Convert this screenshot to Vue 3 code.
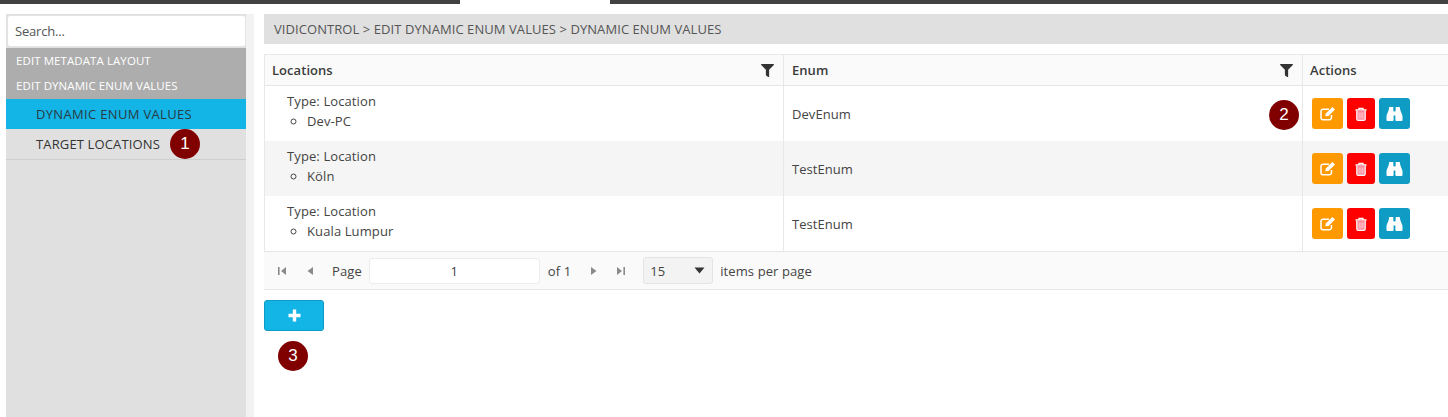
<script setup>
const rows = [
  { place: 'Dev-PC', en: 'DevEnum' },
  { place: 'Köln', en: 'TestEnum' },
  { place: 'Kuala Lumpur', en: 'TestEnum' },
]
</script>

<template>
  <div class="page">
    <div class="topbar"><span class="seg first"></span><span class="gap"></span><span class="seg rest"></span></div>
    <div class="body">
      <aside class="side">
        <input class="search" placeholder="Search..." />
        <div class="group">
          <div class="gitem">EDIT METADATA LAYOUT</div>
          <div class="gitem">EDIT DYNAMIC ENUM VALUES</div>
        </div>
        <div class="mitem active">DYNAMIC ENUM VALUES</div>
        <div class="mitem last">TARGET LOCATIONS<span class="badge b1">1</span></div>
      </aside>
      <main class="main">
        <div class="crumb">VIDICONTROL &gt; EDIT DYNAMIC ENUM VALUES &gt; DYNAMIC ENUM VALUES</div>
        <div class="grid">
          <div class="row head">
            <div class="cell c1">Locations
              <svg class="filter" viewBox="0 0 512 512"><path d="M487.976 0H24.028C2.71 0-8.047 25.866 7.058 40.971L192 225.941V432c0 7.831 3.821 15.17 10.237 19.662l80 55.98C298.02 518.69 320 507.493 320 487.98V225.941l184.947-184.97C520.021 25.896 509.338 0 487.976 0z"/></svg>
            </div>
            <div class="cell c2">Enum
              <svg class="filter" viewBox="0 0 512 512"><path d="M487.976 0H24.028C2.71 0-8.047 25.866 7.058 40.971L192 225.941V432c0 7.831 3.821 15.17 10.237 19.662l80 55.98C298.02 518.69 320 507.493 320 487.98V225.941l184.947-184.97C520.021 25.896 509.338 0 487.976 0z"/></svg>
            </div>
            <div class="cell c3">Actions</div>
          </div>
          <div v-for="(r, i) in rows" :key="i" class="row data" :class="{ alt: i === 1 }">
            <div class="cell c1 loc">
              <div class="type">Type: Location</div>
              <ul class="list"><li>{{ r.place }}</li></ul>
            </div>
            <div class="cell c2 en">{{ r.en }}
              <span v-if="i === 0" class="badge b2">2</span>
            </div>
            <div class="cell c3 acts">
              <button class="act orange" aria-label="edit">
                <svg width="16" height="15" viewBox="0 0 16 15"><path d="M11.500 9v2.600A2 2 0 0 1 9.500 13.700H3A2 2 0 0 1 1 11.700V5.200A2 2 0 0 1 3 3.200H9" fill="none" stroke="#fff" stroke-width="1.500"/><path d="M5.300 10.200 5.800 7.400 12.300 .9 15 3.600 8.500 10Z" fill="#fff"/></svg>
              </button>
              <button class="act red" aria-label="delete">
                <svg width="12" height="14" viewBox="0 0 12 14"><path d="M0.500 3h11M4 3V1.300H8V3" fill="none" stroke="#fff" stroke-width="1.300"/><path d="M1.800 3.500V12A1.300 1.300 0 0 0 3.100 13.300H8.900A1.300 1.300 0 0 0 10.200 12V3.500" fill="#ff8a9c" stroke="#fff" stroke-width="1.200"/><path d="M4.200 5.500v6M6 5.500v6M7.800 5.500v6" stroke="#ffd6dc" stroke-width=".8"/></svg>
              </button>
              <button class="act blue" aria-label="view">
                <svg width="17" height="16" viewBox="0 0 17 16"><path d="M3.200 1H7.300V4.500H7.600V14A1 1 0 0 1 6.600 15H1.500A1 1 0 0 1 .5 14V10.500C.5 8 2.800 6 3.200 1Z" fill="#fff"/><path d="M13.800 1H9.700V4.500H9.400V14A1 1 0 0 0 10.400 15H15.500A1 1 0 0 0 16.500 14V10.500C16.500 8 14.200 6 13.800 1Z" fill="#fff"/><rect x="7" y="5.500" width="3" height="4" fill="#fff"/></svg>
              </button>
            </div>
          </div>
          <div class="pager">
            <svg class="pi first-pi" width="10" height="10" viewBox="0 0 10 10"><rect x="1" y="1" width="1.600" height="8"/><path d="M9 1v8L4 5z"/></svg>
            <svg class="pi prev-pi" width="8" height="10" viewBox="0 0 8 10"><path d="M7 1v8L1.500 5z"/></svg>
            <span class="ptext page-l">Page</span>
            <div class="pinput">1</div>
            <span class="ptext of">of 1</span>
            <svg class="pi next-pi" width="8" height="10" viewBox="0 0 8 10"><path d="M1 1v8L6.500 5z"/></svg>
            <svg class="pi last-pi" width="10" height="10" viewBox="0 0 10 10"><path d="M1 1v8L6 5z"/><rect x="7.400" y="1" width="1.600" height="8"/></svg>
            <div class="psel">15<svg width="11" height="7" viewBox="0 0 11 7"><path d="M.5.500h10L5.500 6.500z"/></svg></div>
            <span class="ptext items">items per page</span>
          </div>
        </div>
        <button class="add" aria-label="add">
          <svg width="13" height="13" viewBox="0 0 13 13"><path d="M.5 6.500h12M6.500 .5v12" stroke="#fff" stroke-width="3.400"/></svg>
        </button>
        <span class="badge b3">3</span>
      </main>
    </div>
  </div>
</template>

<style>
html, body { margin: 0; background: #fff; }
</style>

<style scoped>
.page {
  width: 1448px;
  height: 417px;
  overflow: hidden;
  background: #fff;
  font-family: "Open Sans", "Noto Sans", sans-serif;
  font-size: 13px;
  color: #333;
}
.topbar { display: flex; height: 4px; }
.seg { background: #424242; }
.seg.first { width: 460px; }
.gap { width: 150px; }
.seg.rest { flex: 1; }
.body { display: flex; height: 413px; }
.side {
  width: 240px;
  margin-left: 6px;
  margin-top: 10px;
  background: #e0e0e0;
  border-right: 8px solid #f2f2f2;
  display: flex;
  flex-direction: column;
}
.search {
  box-sizing: border-box;
  height: 32px;
  margin: 1px 0 1px 1px;
  width: 239px;
  border: 1px solid #e4e4e4;
  border-radius: 3px;
  padding: 0 7px;
  background: #fff;
  font: 13px "Open Sans", sans-serif;
  letter-spacing: -0.2px;
  outline: none;
}
.search::placeholder { color: #555; opacity: 1; }
.group { background: #adadad; padding: 0 0 1px; }
.gitem {
  height: 25px;
  line-height: 25px;
  padding-left: 10px;
  color: #fff;
  font-size: 11.500px;
  letter-spacing: 0.08px;
}
.mitem {
  height: 30px;
  line-height: 30px;
  padding-left: 30px;
  font-size: 13px;
  letter-spacing: 0.14px;
  color: #2a3a45;
  display: flex;
  align-items: center;
}
.mitem.active { background: #13b5e6; letter-spacing: 0.33px; }
.mitem.last { border-bottom: 1px solid #cfcfcf; color: #333; }
.badge {
  display: inline-flex;
  align-items: center;
  justify-content: center;
  width: 30px;
  height: 30px;
  border-radius: 50%;
  background: #800000;
  color: #fff;
  font-size: 17px;
  font-family: "Liberation Sans", sans-serif;
}
.b1 { margin-left: 10px; }
.b2 { position: absolute; right: 3px; top: 14px; }
.b3 { margin: 10px 0 0 14px; }
.main {
  flex: 1;
  min-width: 0;
  margin-left: 10px;
  margin-top: 10px;
  display: flex;
  flex-direction: column;
  align-items: flex-start;
}
.crumb {
  box-sizing: border-box;
  width: 100%;
  height: 30px;
  line-height: 30px;
  background: #e0e0e0;
  padding-left: 10px;
  font-size: 13px;
  letter-spacing: 0.07px;
  color: #555;
}
.grid {
  width: 100%;
  margin-top: 10px;
  border-top: 1px solid #e8e8e8;
  border-left: 1px solid #e8e8e8;
  box-sizing: border-box;
}
.row { display: flex; }
.head {
  height: 30px;
  background: #fafafa;
  border-bottom: 1px solid #e6e6e6;
  font-weight: 600;
  letter-spacing: 0.05px;
  color: #3c3c3c;
}
.data { height: 55px; background: #fff; }
.data.alt { background: #f5f5f5; }
.cell {
  box-sizing: border-box;
  position: relative;
  display: flex;
  align-items: center;
  padding-left: 7px;
  border-right: 1px solid #e8e8e8;
}
.c1 { width: 519px; }
.c2 { width: 519px; padding-left: 8px; }
.c3 { flex: 1; border-right: 0; padding-left: 7px; }
.filter {
  position: absolute;
  right: 9px;
  top: 9px;
  width: 13px;
  height: 13px;
  fill: #333;
}
.loc {
  flex-direction: column;
  align-items: flex-start;
  justify-content: center;
  padding-left: 22px;
  padding-bottom: 6px;
  letter-spacing: 0.11px;
  color: #444;
  line-height: 20px;
}
.list {
  margin: 0;
  padding: 0 0 0 20px;
  list-style: circle;
}
.en { letter-spacing: 0.05px; color: #444; }
.acts { gap: 4px; padding-left: 9px; }
.act {
  width: 31px;
  height: 31px;
  padding: 0;
  border: 0;
  border-radius: 3px;
  display: flex;
  align-items: center;
  justify-content: center;
}
.orange { background: #ff9900; }
.red { background: #ff0000; width: 28px; }
.blue { background: #0f9cc4; }
.pager {
  box-sizing: border-box;
  height: 39px;
  display: flex;
  align-items: center;
  background: #fafafa;
  border-top: 1px solid #e6e6e6;
  border-bottom: 1px solid #e6e6e6;
  margin-left: -1px;
  padding-left: 13px;
  letter-spacing: 0.1px;
  color: #444;
}
.pi { fill: #8a8a8a; flex: none; }
.prev-pi { margin-left: 19px; }
.page-l { margin-left: 18px; }
.pinput {
  box-sizing: border-box;
  width: 171px;
  height: 26px;
  line-height: 24px;
  margin-left: 7px;
  background: #fff;
  border: 1px solid #ececec;
  border-radius: 3px;
  text-align: center;
}
.of { margin-left: 8px; }
.next-pi { margin-left: 19px; }
.last-pi { margin-left: 18px; }
.psel {
  box-sizing: border-box;
  width: 70px;
  height: 27px;
  margin-left: 17px;
  padding: 0 6px;
  display: flex;
  align-items: center;
  justify-content: space-between;
  background: #f3f3f3;
  border: 1px solid #e4e4e4;
  border-radius: 3px;
}
.psel svg { fill: #333; margin-right: 1px; }
.items { margin-left: 7px; }
.add {
  width: 60px;
  height: 31px;
  margin-top: 10px;
  padding: 0;
  border: 1px solid #0f9cc4;
  border-radius: 3px;
  background: #13b5e6;
  display: flex;
  align-items: center;
  justify-content: center;
}
</style>
